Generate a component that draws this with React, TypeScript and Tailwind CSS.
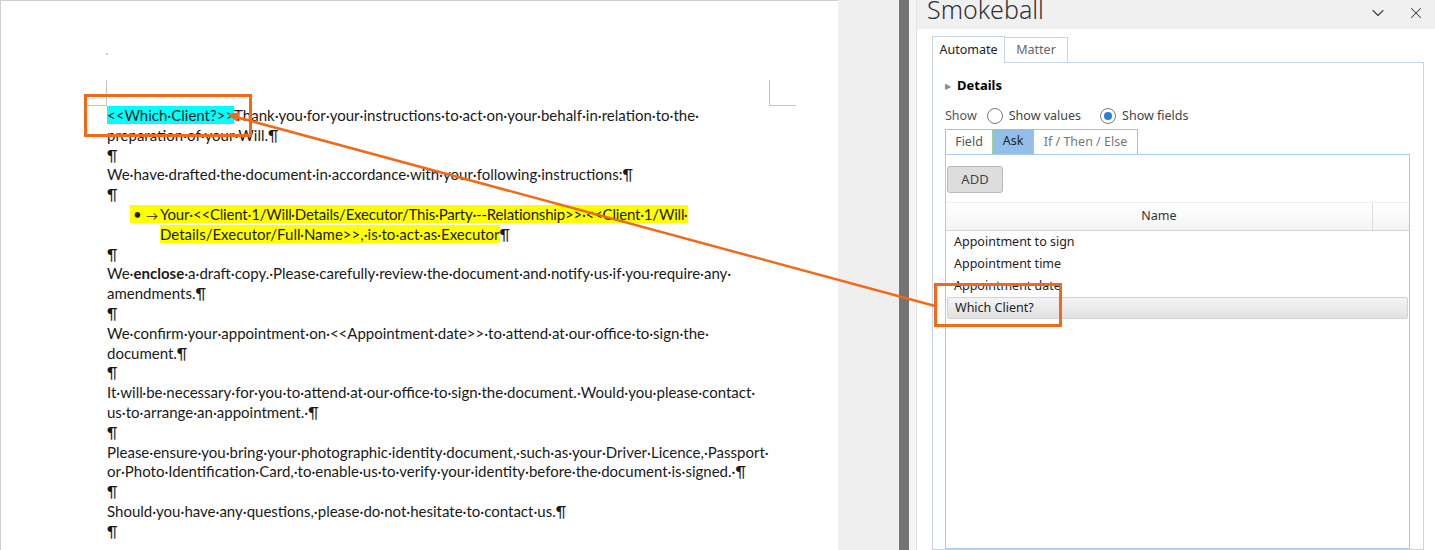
import React from 'react';
import { ChevronDown, X } from 'lucide-react';

// Word document lines, rendered one per visual line like the screenshot
const Line: React.FC<{ children?: React.ReactNode }> = ({ children }) => (
  <div className="h-[19.8px] whitespace-pre">{children}</div>
);

const Para = () => <Line>¶</Line>;

const DocumentPage: React.FC = () => (
  <div className="relative w-[838px] h-full shrink-0 bg-white border-l border-t border-[#cfcfcf]">
    {/* crop marks */}
    <div className="absolute left-[105px] top-[52px] w-[2px] h-[2px] bg-[#cfcfcf]" />
    <div className="absolute left-[83px] top-[79px] w-[23px] h-[26px] border-r border-b border-[#c4c4c4]" />
    <div className="absolute left-[768px] top-[79px] w-[27px] h-[26px] border-l border-b border-[#c4c4c4]" />

    <div className="pt-[105px] pl-[106px] font-['Lato',sans-serif] text-[15px] leading-[19.8px] text-[#1a1a1a]">
      <Line>
        <span className="bg-[#00ffff]">{'<<Which·Client?>>'}</span>
        {'Thank·you·for·your·instructions·to·act·on·your·behalf·in·relation·to·the·'}
      </Line>
      <Line>{'preparation·of·your·Will.¶'}</Line>
      <Para />
      <Line>{'We·have·drafted·the·document·in·accordance·with·your·following·instructions:¶'}</Line>
      <Para />
      <div className="h-[19.8px] whitespace-pre pl-[23px]">
        <span className="bg-[#ffff00] tracking-[-0.2px]">
          <span className="inline-block w-[16px] pl-[3px]">•</span>
          <span className="inline-block w-[14px] text-[12px]">→</span>
          {'Your·<<Client·1/Will·Details/Executor/This·Party·--Relationship>>·<<Client·1/Will·'}
        </span>
      </div>
      <div className="h-[19.8px] whitespace-pre pl-[53px]">
        <span className="bg-[#ffff00]">{'Details/Executor/Full·Name>>,·is·to·act·as·Executor'}</span>¶
      </div>
      <Para />
      <Line>
        {'We·'}
        <span className="font-bold">enclose</span>
        {'·a·draft·copy.·Please·carefully·review·the·document·and·notify·us·if·you·require·any·'}
      </Line>
      <Line>{'amendments.¶'}</Line>
      <Para />
      <Line>{'We·confirm·your·appointment·on·<<Appointment·date>>·to·attend·at·our·office·to·sign·the·'}</Line>
      <Line>{'document.¶'}</Line>
      <Para />
      <Line>{'It·will·be·necessary·for·you·to·attend·at·our·office·to·sign·the·document.·Would·you·please·contact·'}</Line>
      <Line>{'us·to·arrange·an·appointment.·¶'}</Line>
      <Para />
      <Line>{'Please·ensure·you·bring·your·photographic·identity·document,·such·as·your·Driver·Licence,·Passport·'}</Line>
      <Line>{'or·Photo·Identification·Card,·to·enable·us·to·verify·your·identity·before·the·document·is·signed.·¶'}</Line>
      <Para />
      <Line>{'Should·you·have·any·questions,·please·do·not·hesitate·to·contact·us.¶'}</Line>
      <Para />
    </div>
  </div>
);

const Radio: React.FC<{ checked?: boolean }> = ({ checked }) => (
  <span className="w-[16px] h-[16px] rounded-full border border-[#7a7a7a] bg-white flex items-center justify-center">
    {checked && <span className="w-[8px] h-[8px] rounded-full bg-[#2a7de1]" />}
  </span>
);

const rows = ['Appointment to sign', 'Appointment time', 'Appointment date'];

const SmokeballPanel: React.FC = () => (
  <div className="flex-1 h-full flex flex-col bg-white font-['Noto_Sans',sans-serif] text-[#222]">
    {/* pane header */}
    <div className="h-[29px] shrink-0 bg-[#f0f0f0] flex items-start overflow-hidden">
      <span className="pl-[10px] -mt-[8px] text-[25px] leading-[34px] text-[#333] font-light">Smokeball</span>
      <div className="ml-auto flex items-center gap-[19px] pr-[10px] pt-[3px] text-[#444]">
        <ChevronDown size={20} strokeWidth={1.4} />
        <X size={18} strokeWidth={1.4} />
      </div>
    </div>

    <div className="flex-1 flex flex-col pl-[15px] pr-[11px] pt-[7px] min-h-0">
      {/* main tabs */}
      <div className="flex items-end h-[26px] text-[12.5px]">
        <div className="w-[73px] h-[27px] -mb-px bg-white border border-b-0 border-[#c6d4e4] flex items-center justify-center text-[#222] relative z-10">
          Automate
        </div>
        <div className="w-[63px] h-[25px] bg-white border border-l-0 border-b-0 border-[#c6d4e4] flex items-center justify-center text-[#666]">
          Matter
        </div>
      </div>

      <div className="flex-1 border border-[#c6d4e4] pl-[12px] flex flex-col min-h-0">
        <div className="mt-[14px] h-[18px] flex items-center gap-[6px]">
          <span className="text-[8px] text-[#8a8a8a] leading-none">▶</span>
          <span className="text-[13px] font-bold text-black">Details</span>
        </div>

        <div className="mt-[12px] h-[18px] flex items-center text-[12.5px] text-[#444]">
          <span className="text-[#555]">Show</span>
          <span className="ml-[10px]"><Radio /></span>
          <span className="ml-[6px]">Show values</span>
          <span className="ml-[19px]"><Radio checked /></span>
          <span className="ml-[6px]">Show fields</span>
        </div>

        {/* sub tabs */}
        <div className="mt-[4px] flex h-[25px] text-[12.5px]">
          <div className="w-[48px] border border-b-0 border-[#98d398] flex items-center justify-center text-[#555]">Field</div>
          <div className="w-[40px] bg-[#92bee9] flex items-center justify-center text-[#222]">Ask</div>
          <div className="w-[105px] border border-b-0 border-[#eba6a6] flex items-center justify-center text-[#777]">If / Then / Else</div>
        </div>

        <div className="flex-1 w-[465px] border border-[#a9cbec] flex flex-col">
          <div className="pt-[11px] pl-[1px]">
            <div className="w-[56px] h-[27px] rounded-[3px] bg-[#dddddd] border border-[#b9b9b9] flex items-center justify-center text-[13px] text-[#444]">
              ADD
            </div>
          </div>

          <div className="mt-[9px] h-[29px] flex bg-gradient-to-b from-white to-[#f4f4f4] border-t border-[#f0f0f0] border-b border-b-[#d6d6d6] text-[12.5px]">
            <div className="w-[427px] flex items-center justify-center border-r border-[#dcdcdc] text-[#333]">Name</div>
          </div>

          <div className="text-[12.5px] text-[#222]">
            {rows.map((r) => (
              <div key={r} className="h-[22px] flex items-center pl-[8px]">{r}</div>
            ))}
            <div className="h-[22px] mx-px flex items-center pl-[7px] rounded-[2px] border border-[#d3d3d3] bg-gradient-to-b from-[#f4f4f4] to-[#e1e1e1]">
              Which Client?
            </div>
          </div>
        </div>
      </div>
    </div>
  </div>
);

export default function App() {
  return (
    <div className="relative w-[1435px] h-[550px] overflow-hidden flex bg-[#f0f0f0]">
      <DocumentPage />
      <div className="w-[61px] shrink-0 bg-[#efefef]" />
      <div className="w-[10px] shrink-0 bg-[#737373]" />
      <div className="w-[8px] shrink-0 bg-[#f4f4f4] border-r border-[#e2e2e2]" />
      <SmokeballPanel />

      {/* callout annotation */}
      <svg className="absolute inset-0 pointer-events-none" width="1435" height="550">
        <rect x="85.5" y="95.5" width="165" height="40" fill="none" stroke="#f06a1c" strokeWidth="3" />
        <rect x="935.5" y="284.5" width="125" height="41" fill="none" stroke="#f06a1c" strokeWidth="3" />
        <line x1="935" y1="306" x2="236" y2="117" stroke="#f06a1c" strokeWidth="2.5" />
        <polygon points="227,114 237.3,121.9 239.9,112.3" fill="#f06a1c" />
      </svg>
    </div>
  );
}
